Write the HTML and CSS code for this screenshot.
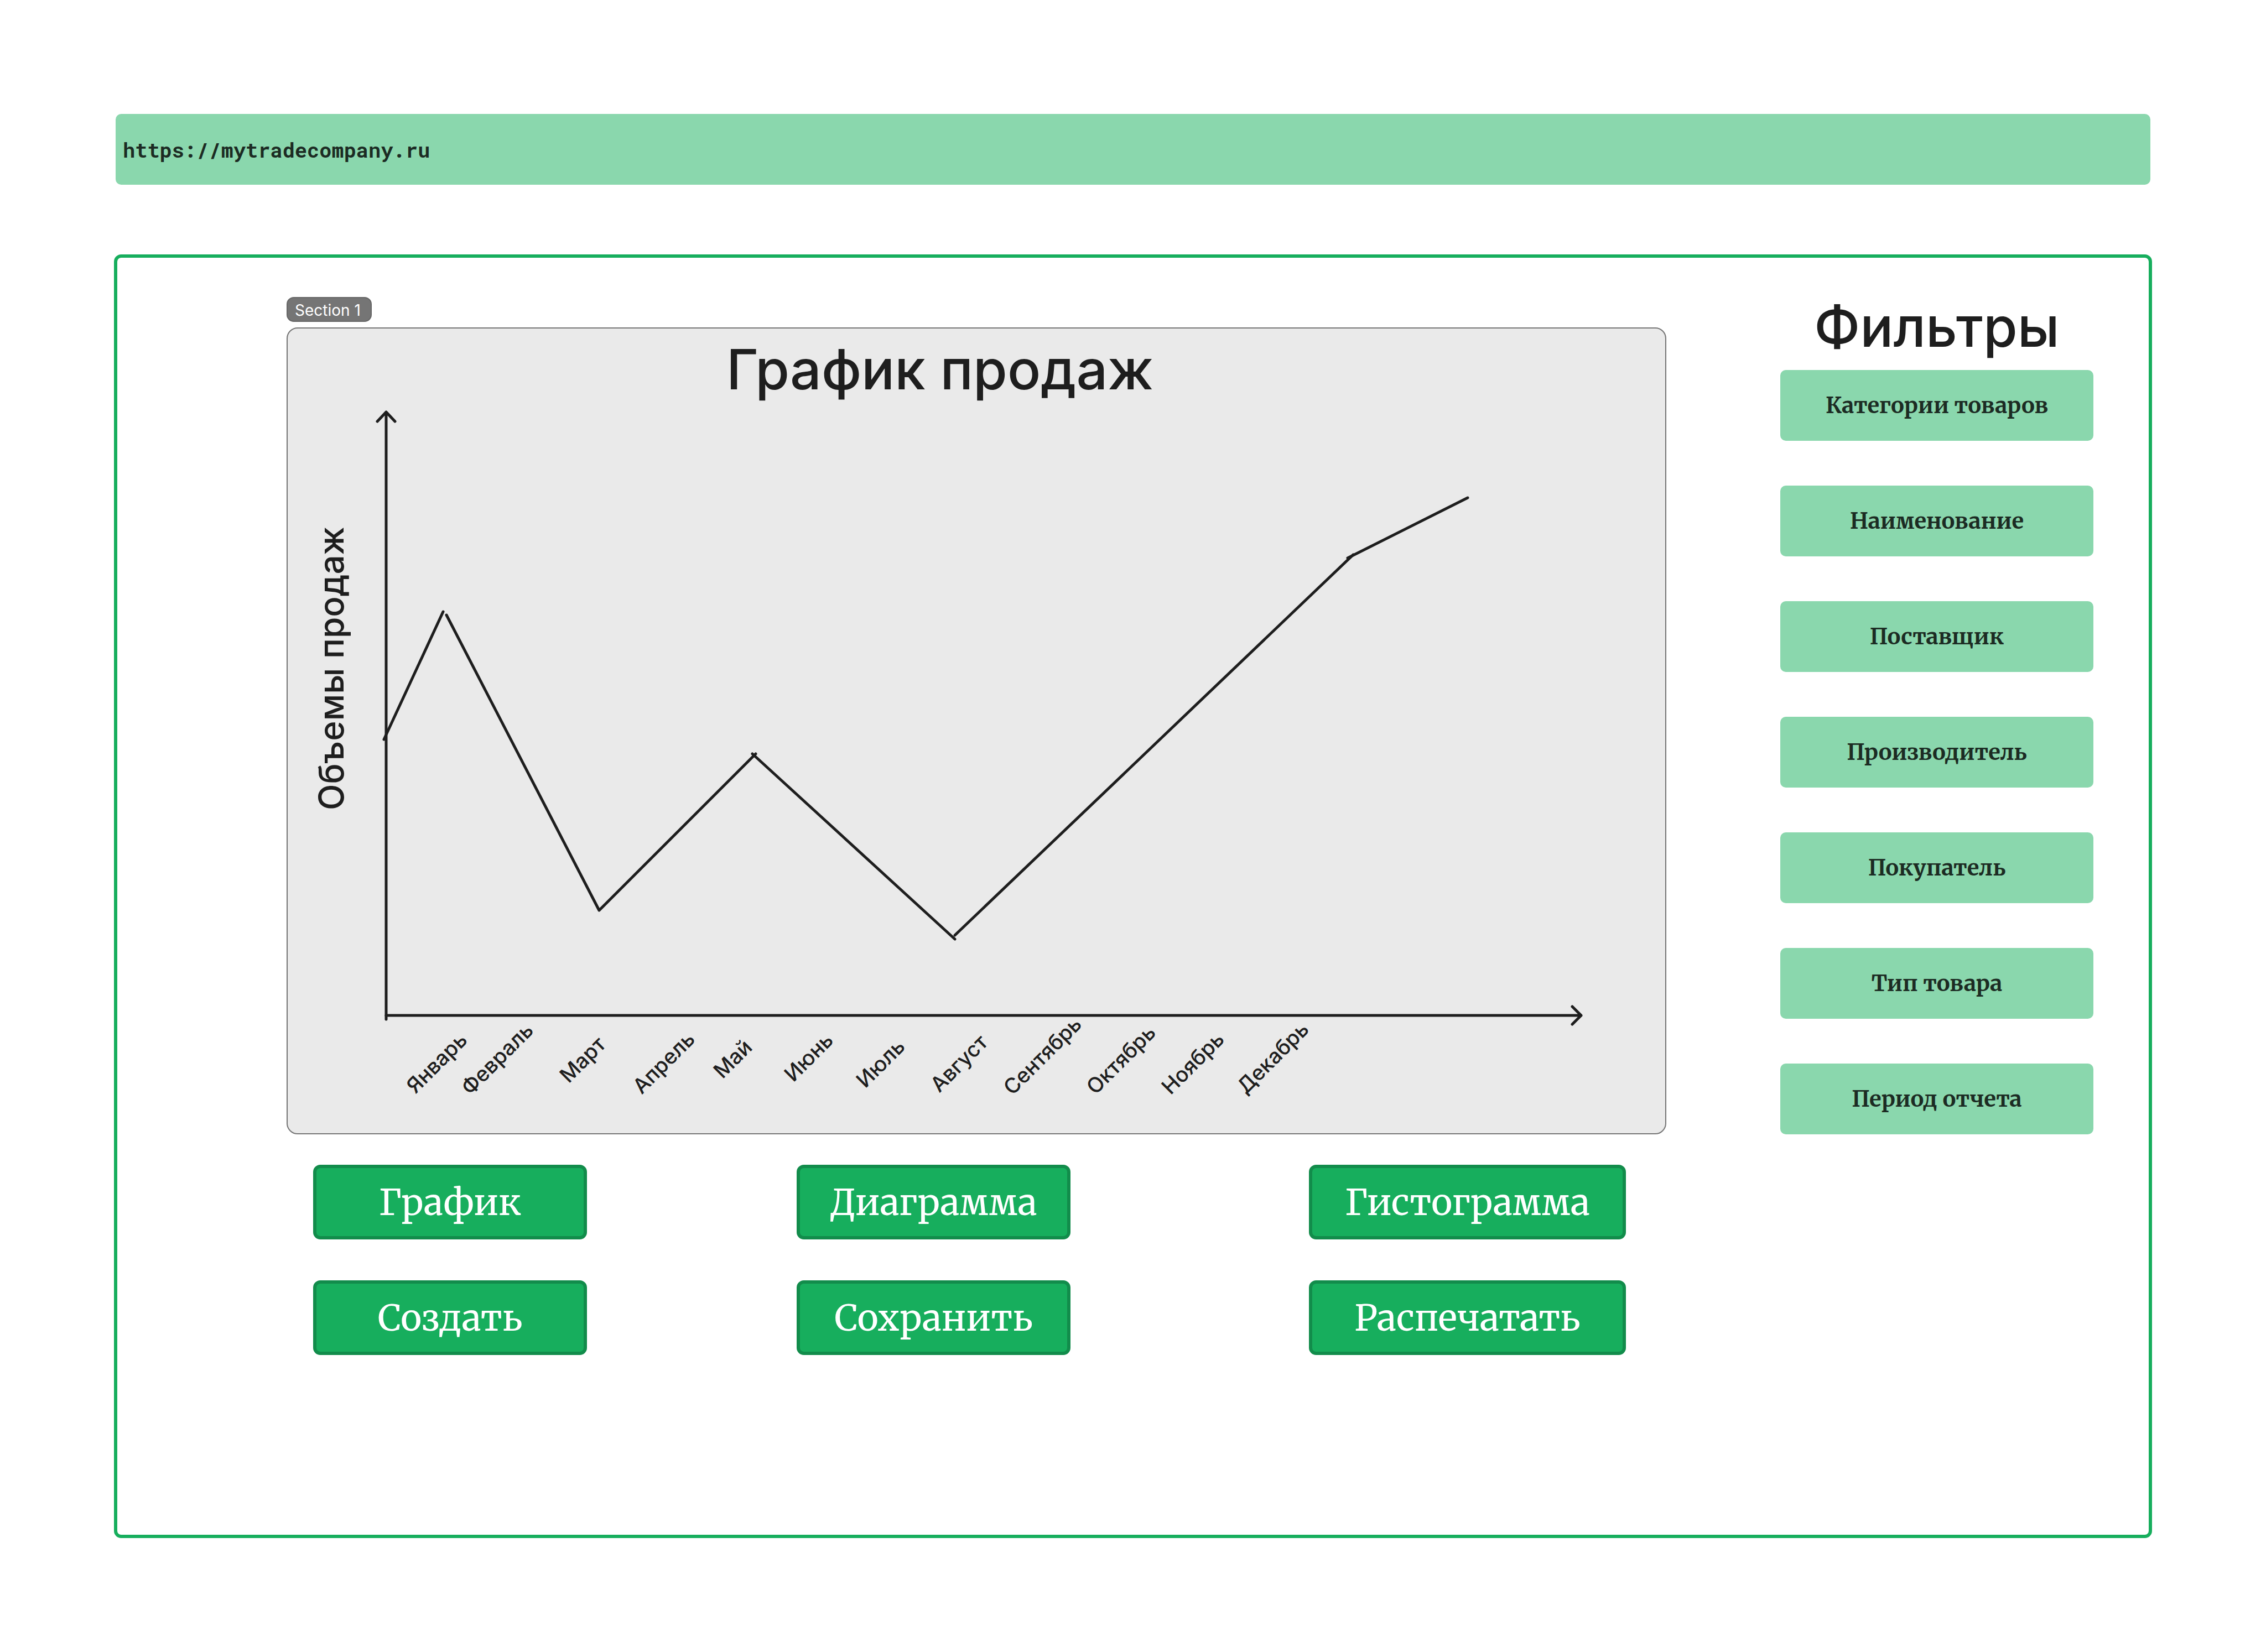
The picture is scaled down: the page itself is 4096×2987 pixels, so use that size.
FILE: index.html
```html
<!DOCTYPE html>
<html lang="ru">
<head>
<meta charset="utf-8">
<meta name="viewport" content="width=device-width, initial-scale=1">
<title>График продаж</title>
<link rel="stylesheet" href="styles.css">
</head>
<body class="page">
<header class="address">
  <input class="address-input" type="text" value="https://mytradecompany.ru" aria-label="Адрес сайта">
</header>
<main class="frame">
  <div class="report">
    <span class="section-tag">Section 1</span>
    <section class="chart-card">
      <h1 class="heading chart-title">График продаж</h1>
      <svg class="chart" viewBox="0 0 2490 1319" role="img" aria-label="Объемы продаж по месяцам">
        <g class="chart-line">
          <path d="M178 1113V15M162 32L178 15L194 32"/>
          <path d="M178 1106H2338M2322 1090L2338 1106L2322 1122"/>
          <path d="M174 607L281 376"/>
          <path d="M287 382L563 916L846 633"/>
          <path d="M840 633L1206 968"/>
          <path d="M1206 961L1926 273"/>
          <path d="M1916 279L2133 170"/>
        </g>
        <text class="axis-title" transform="translate(101 735) rotate(-90)">Объемы продаж</text>
        <g class="months">
          <text transform="translate(231 1249) rotate(-45)">Январь</text>
          <text transform="translate(330 1252) rotate(-45)">Февраль</text>
          <text transform="translate(508 1230) rotate(-45)">Март</text>
          <text transform="translate(640 1250) rotate(-45)">Апрель</text>
          <text transform="translate(786 1222) rotate(-45)">Май</text>
          <text transform="translate(914 1228) rotate(-45)">Июнь</text>
          <text transform="translate(1044 1239) rotate(-45)">Июль</text>
          <text transform="translate(1178 1247) rotate(-45)">Август</text>
          <text transform="translate(1310 1252) rotate(-45)">Сентябрь</text>
          <text transform="translate(1460 1251) rotate(-45)">Октябрь</text>
          <text transform="translate(1596 1251) rotate(-45)">Ноябрь</text>
          <text transform="translate(1732 1250) rotate(-45)">Декабрь</text>
        </g>
      </svg>
    </section>
    <div class="actions">
      <button class="action" type="button">График</button>
      <button class="action" type="button">Диаграмма</button>
      <button class="action action-wide" type="button">Гистограмма</button>
      <button class="action" type="button">Создать</button>
      <button class="action" type="button">Сохранить</button>
      <button class="action action-wide" type="button">Распечатать</button>
    </div>
  </div>
  <aside class="filters">
    <h2 class="heading">Фильтры</h2>
    <div class="filter-list">
      <button class="filter" type="button">Категории товаров</button>
      <button class="filter" type="button">Наименование</button>
      <button class="filter" type="button">Поставщик</button>
      <button class="filter" type="button">Производитель</button>
      <button class="filter" type="button">Покупатель</button>
      <button class="filter" type="button">Тип товара</button>
      <button class="filter" type="button">Период отчета</button>
    </div>
  </aside>
</main>
</body>
</html>
```
FILE: styles.css
```css
* {
  box-sizing: border-box;
}

.page {
  margin: 0;
  padding: 206px;
  background: #fff;
  color: #1e1e1e;
  font-family: Inter, "Liberation Sans", sans-serif;
}

.address {
  margin: 0 3px 126px;
}

.address-input {
  display: block;
  width: 100%;
  height: 128px;
  padding: 0 13px;
  border: 0;
  border-radius: 10px;
  background: #8ad7ad;
  color: #1c2b23;
  font: 700 37px "Roboto Mono", "DejaVu Sans Mono", monospace;
}

.frame {
  display: flex;
  align-items: flex-start;
  gap: 206px;
  padding: 63px 100px 325px 306px;
  border: 6px solid #17ae5d;
  border-radius: 13px;
}

.report {
  flex: 1;
  display: flex;
  flex-direction: column;
  padding-top: 8px;
}

.section-tag {
  align-self: flex-start;
  margin-bottom: 10px;
  padding: 5px 18px 1px 13px;
  border: 2px solid #666;
  border-radius: 13px;
  background: #757575;
  color: #fff;
  font-size: 28px;
  line-height: 35px;
}

.chart-card {
  padding-top: 12px;
  border: 2px solid #757575;
  border-radius: 20px;
  background: #eaeaea;
}

.heading {
  margin: 0;
  font-size: 100px;
  font-weight: 500;
  line-height: 124px;
  text-align: center;
}

.chart-title {
  padding-right: 132px;
}

.chart {
  display: block;
  width: 100%;
  height: auto;
}

.chart-line {
  fill: none;
  stroke: #1e1e1e;
  stroke-width: 5px;
  stroke-linecap: round;
  stroke-linejoin: round;
}

.axis-title,
.months {
  fill: #1e1e1e;
  font-weight: 500;
}

.axis-title {
  font-size: 62px;
}

.months {
  font-size: 38px;
}

.actions {
  display: grid;
  grid-template-columns: 874fr 926fr 573fr;
  row-gap: 74px;
  padding: 55px 73px 0 48px;
}

.action {
  width: 495px;
  height: 135px;
  padding: 0;
  border: 6px solid #128c4b;
  border-radius: 13px;
  background: #17ae5d;
  color: #fff;
  font: 400 65px Merriweather, "Noto Serif", "DejaVu Serif Condensed", "DejaVu Serif", serif;
}

.action-wide {
  width: 100%;
}

.filters {
  width: 566px;
}

.filter-list {
  display: flex;
  flex-direction: column;
  gap: 81px;
  margin-top: 16px;
}

.filter {
  height: 128px;
  padding: 0;
  border: 0;
  border-radius: 10px;
  background: #8ad7ad;
  color: #1c2b23;
  font: 700 40px Merriweather, "Noto Serif", "DejaVu Serif Condensed", "DejaVu Serif", serif;
}
```
